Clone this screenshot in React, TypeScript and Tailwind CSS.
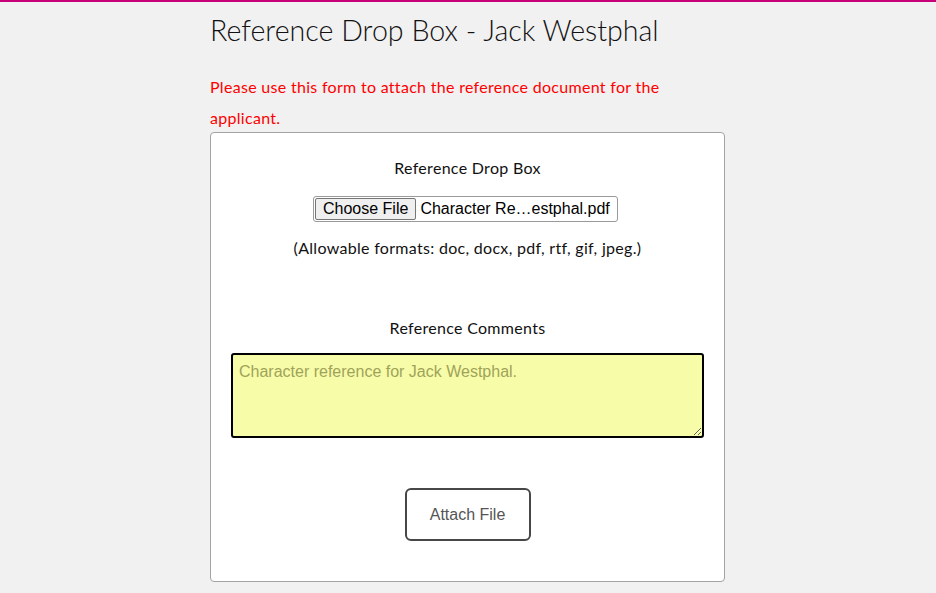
import React from 'react';

const App = () => {
    return (
        <div className="min-h-[593px] bg-[#f1f1f1] border-t-2 border-[#c8007a] font-['Lato',sans-serif]">
            <div className="w-[515px] ml-[210px]">
                <h1 className="pt-[10px] text-[28.6px] leading-[36px] font-light text-[#111]">
                    Reference Drop Box - Jack Westphal
                </h1>
                <p className="mt-[23px] text-[16px] leading-[31px] tracking-[0.3px] text-[#ff0000] pr-[40px]">
                    Please use this form to attach the reference document for the applicant.
                </p>
                <div className="-mt-[1px] bg-white border border-[#a3a3a3] rounded-[4px] px-[20px] pt-[25px] pb-[40px] flex flex-col items-center">
                    <div className="text-[16px] leading-[20px] tracking-[0.3px] text-[#111]">Reference Drop Box</div>
                    <div className="mt-[18px] -ml-[4px] flex items-center w-[305px] h-[26px] border border-[#9a9a9a] rounded-[3px] bg-white font-['Liberation_Sans',sans-serif] text-[16px] text-black">
                        <span className="ml-[1px] h-[22px] px-[7px] flex items-center bg-[#efefef] border border-[#767676] rounded-[2px]">
                            Choose File
                        </span>
                        <span className="ml-[4px] whitespace-nowrap">Character Re…estphal.pdf</span>
                    </div>
                    <div className="mt-[16px] text-[16px] leading-[20px] tracking-[0.3px] text-[#111]">
                        (Allowable formats: doc, docx, pdf, rtf, gif, jpeg.)
                    </div>
                    <div className="mt-[60px] text-[16px] leading-[20px] tracking-[0.3px] text-[#111]">Reference Comments</div>
                    <textarea
                        className="mt-[15px] w-[473px] h-[85px] border-2 border-black rounded-[3px] bg-[#f7fca8] px-[6px] py-[5px] font-['Liberation_Sans',sans-serif] text-[16px] placeholder:text-[#9fa35a] outline-none"
                        placeholder="Character reference for Jack Westphal."
                    />
                    <button className="mt-[50px] w-[126px] h-[53px] border-2 border-[#474747] rounded-[6px] bg-white font-['Liberation_Sans',sans-serif] text-[16px] text-[#555]">
                        Attach File
                    </button>
                </div>
            </div>
        </div>
    );
};

export default App;
